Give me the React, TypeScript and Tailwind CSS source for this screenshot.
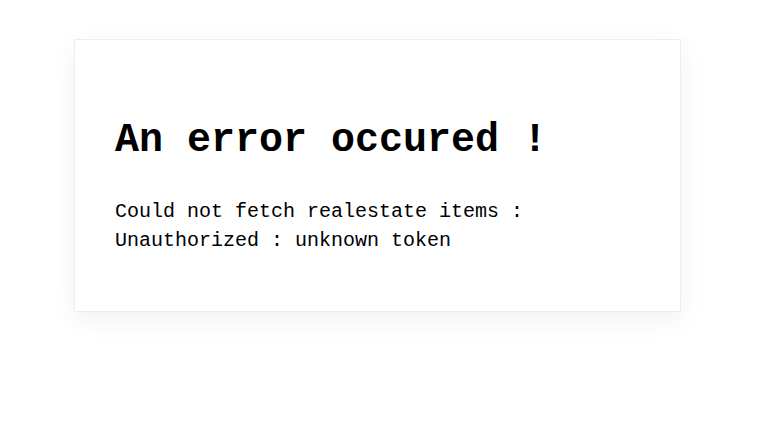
export default function App() {
  return (
    <div className="min-h-screen w-full bg-white pt-[39px] pl-[74px]">
      <div className="w-[607px] h-[273px] border border-[#ededed] bg-white shadow-[0_8px_24px_rgba(0,0,0,0.06)] px-10 pt-[73px] font-['Liberation_Mono',monospace] text-black">
        <h1 className="text-[40px] leading-[56px] font-bold">An error occured !</h1>
        <p className="mt-[28px] text-[20px] leading-[29px]">
          Could not fetch realestate items :<br />Unauthorized : unknown token
        </p>
      </div>
    </div>
  );
}
